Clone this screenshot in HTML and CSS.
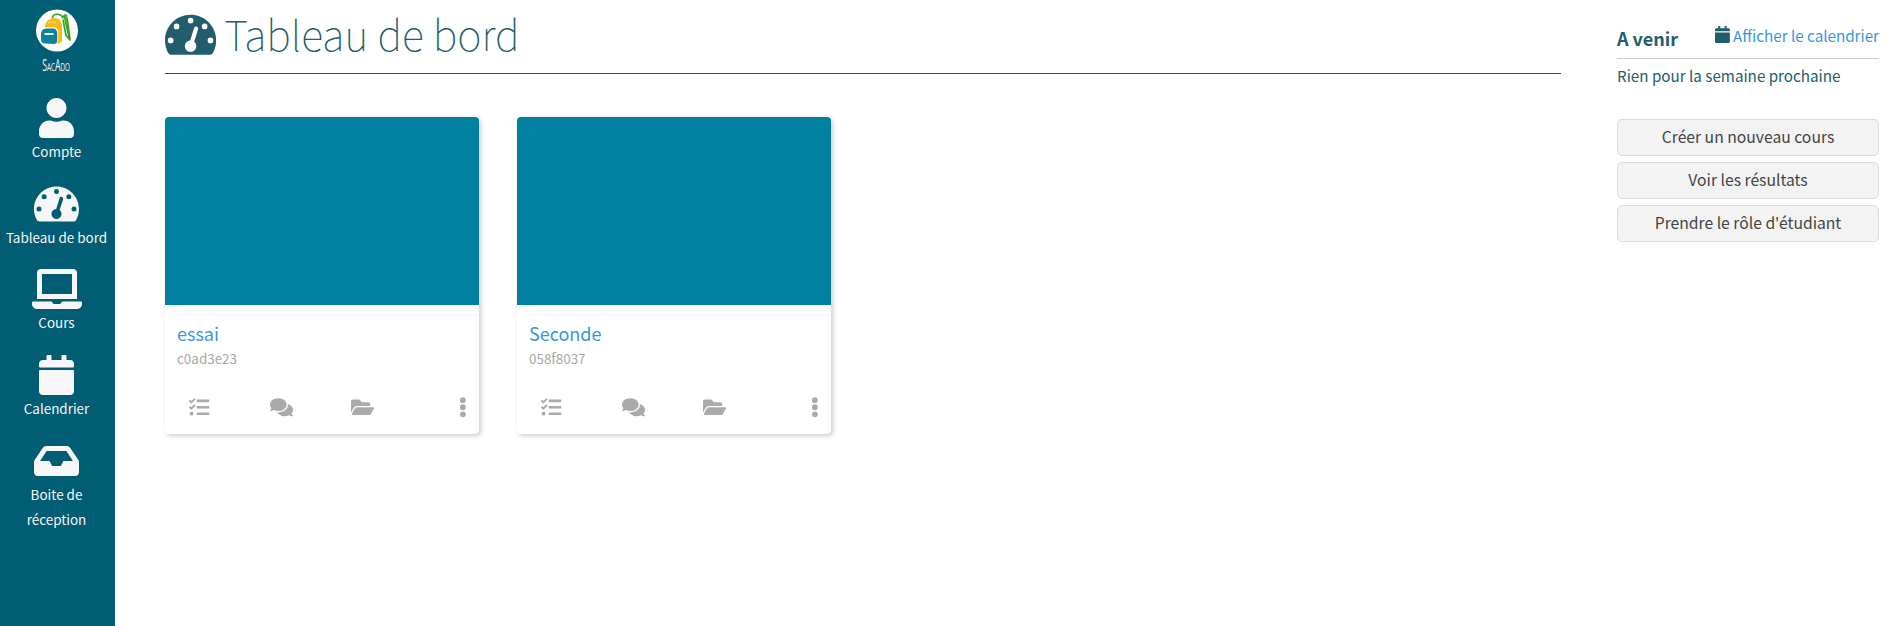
FILE: index.html
```html
<!DOCTYPE html>
<html lang="fr">
<head>
<meta charset="utf-8">
<title>Tableau de bord</title>
<link rel="stylesheet" href="styles.css">
</head>
<body>
<svg class="sprite" aria-hidden="true">
  <symbol id="user" viewBox="0 0 448 512"><path d="M224 256c70.7 0 128-57.3 128-128S294.7 0 224 0 96 57.3 96 128s57.3 128 128 128zm89.6 32h-16.7c-22.2 10.2-46.9 16-72.9 16s-50.6-5.8-72.9-16h-16.7C60.2 288 0 348.2 0 422.4V464c0 26.5 21.5 48 48 48h352c26.5 0 48-21.5 48-48v-41.6c0-74.2-60.2-134.4-134.4-134.4z"/></symbol>
  <symbol id="gauge" viewBox="0 0 576 512"><path fill-rule="evenodd" d="M288 32C128.94 32 0 160.94 0 320c0 52.8 14.25 102.26 39.06 144.8 5.61 9.62 16.3 15.2 27.44 15.2h443c11.14 0 21.83-5.58 27.44-15.2C561.75 422.26 576 372.8 576 320 576 160.94 447.06 32 288 32zM288 64a32 32 0 1 1 0 64 32 32 0 0 1 0-64zM130 130a32 32 0 1 1 0 64 32 32 0 0 1 0-64zM446 130a32 32 0 1 1 0 64 32 32 0 0 1 0-64zM64 288a32 32 0 1 1 0 64 32 32 0 0 1 0-64zM512 288a32 32 0 1 1 0 64 32 32 0 0 1 0-64zM327 181c4-12.600 17.500-19.700 30.100-15.900 12.600 4 19.700 17.500 15.800 30.100L327.700 333.800C343 345 352 363 352 384c0 35.300-28.700 64-64 64s-64-28.700-64-64c0-34 26.500-61.900 60-63.900z"/></symbol>
  <symbol id="laptop" viewBox="0 0 640 512"><path d="M624 416H381.54c-.74 19.81-14.71 32-32.74 32H288c-18.69 0-33.02-17.47-32.77-32H16c-8.8 0-16 7.2-16 16v16c0 35.2 28.8 64 64 64h512c35.2 0 64-28.8 64-64v-16c0-8.8-7.2-16-16-16zM576 48c0-26.400-21.600-48-48-48H112C85.600 0 64 21.600 64 48v336h512V48zm-64 272H128V64h384v256z"/></symbol>
  <symbol id="calendar" viewBox="0 0 448 512"><path d="M12 192h424c6.600 0 12 5.400 12 12v260c0 26.500-21.500 48-48 48H48c-26.500 0-48-21.500-48-48V204c0-6.600 5.400-12 12-12zm436-44v-36c0-26.500-21.500-48-48-48h-48V12c0-6.600-5.400-12-12-12h-40c-6.600 0-12 5.400-12 12v52H160V12c0-6.600-5.400-12-12-12h-40c-6.600 0-12 5.400-12 12v52H48C21.500 64 0 85.500 0 112v36c0 6.600 5.400 12 12 12h424c6.600 0 12-5.400 12-12z"/></symbol>
  <symbol id="inbox" viewBox="0 0 576 512"><path d="M567.938 243.908L462.25 85.374A48.003 48.003 0 0 0 422.311 64H153.689a48 48 0 0 0-39.938 21.374L8.062 243.908A47.994 47.994 0 0 0 0 270.533V400c0 26.510 21.490 48 48 48h480c26.510 0 48-21.490 48-48V270.533a47.994 47.994 0 0 0-8.062-26.625zM162.252 128h251.497l85.333 128H376l-32 64H232l-32-64H76.918l85.334-128z"/></symbol>
  <symbol id="tasks" viewBox="0 0 512 512"><path d="M139.610 35.500a12 12 0 0 0-17 0L58.930 98.810l-22.700-22.120a12 12 0 0 0-17 0L3.530 92.410a12 12 0 0 0 0 17l47.590 47.400a12.780 12.780 0 0 0 17.610 0l15.590-15.620L156.520 69a12.090 12.090 0 0 0 .09-17zm0 159.190a12 12 0 0 0-17 0l-63.680 63.720-22.700-22.100a12 12 0 0 0-17 0L3.530 252a12 12 0 0 0 0 17L51 316.500a12.770 12.770 0 0 0 17.600 0l15.700-15.690 72.200-72.220a12 12 0 0 0 .09-16.900zM64 368c-26.490 0-48.590 21.500-48.590 48S37.530 464 64 464a48 48 0 0 0 0-96zm432 16H208a16 16 0 0 0-16 16v32a16 16 0 0 0 16 16h288a16 16 0 0 0 16-16v-32a16 16 0 0 0-16-16zm0-320H208a16 16 0 0 0-16 16v32a16 16 0 0 0 16 16h288a16 16 0 0 0 16-16V80a16 16 0 0 0-16-16zm0 160H208a16 16 0 0 0-16 16v32a16 16 0 0 0 16 16h288a16 16 0 0 0 16-16v-32a16 16 0 0 0-16-16z"/></symbol>
  <symbol id="comments" viewBox="0 0 576 512"><path d="M416 192c0-88.400-93.100-160-208-160S0 103.600 0 192c0 34.300 14.100 65.900 38 92-13.400 30.200-35.500 54.200-35.800 54.500-2.200 2.300-2.800 5.700-1.500 8.700S4.800 352 8 352c36.600 0 66.900-12.300 88.700-25 32.200 15.700 70.300 25 111.300 25 114.900 0 208-71.600 208-160zm122 220c23.900-26 38-57.700 38-92 0-66.900-53.500-124.200-129.300-148.100.9 6.600 1.300 13.300 1.300 20.100 0 105.900-107.700 192-240 192-10.800 0-21.300-.8-31.700-1.900C207.800 439.600 281.800 480 368 480c41 0 79.100-9.200 111.300-25 21.800 12.700 52.100 25 88.700 25 3.200 0 6.100-1.900 7.300-4.800 1.300-2.900.7-6.300-1.500-8.700-.3-.3-22.400-24.200-35.800-54.500z"/></symbol>
  <symbol id="folder" viewBox="0 0 576 512"><path d="M572.694 292.093L500.270 416.248A63.997 63.997 0 0 1 444.989 448H45.025c-18.523 0-30.064-20.093-20.731-36.093l72.424-124.155A64 64 0 0 1 152 256h399.964c18.523 0 30.064 20.093 20.730 36.093zM152 224h328v-48c0-26.510-21.490-48-48-48H272l-64-64H48C21.490 64 0 85.490 0 112v278.046l69.077-118.418C86.214 242.250 117.989 224 152 224z"/></symbol>
  <symbol id="dots" viewBox="0 0 192 512"><circle cx="96" cy="80" r="72"/><circle cx="96" cy="256" r="72"/><circle cx="96" cy="432" r="72"/></symbol>
</svg>
<div class="app">
  <nav class="sidebar">
    <a class="brand">
      <svg class="brand-logo" viewBox="0 0 42 42">
        <circle cx="21" cy="21" r="21" fill="#fff"/>
        <path d="M16.500 8.500C17 3.500 24.500 3.500 27 8.500M26.500 9Q27 5.500 30 5.500L32 14L34 30.500L30 26L27 10M28.500 7L33.500 30" fill="none" stroke="#38a51f" stroke-width="1.700" stroke-linejoin="round"/>
        <path d="M9 20C8 12 13 9 18 8.500C24 9 26 12 26 18V30C26 33 24 34 20 34H12Z" fill="#fdb913"/>
        <path d="M12 13.500Q16 11.500 20 13.500" fill="none" stroke="#fff" stroke-width=".5"/>
        <rect x="4.300" y="17.800" width="17.900" height="17.400" rx="5" fill="#fff"/>
        <path d="M5 24Q5.500 19.500 10 19H17Q21 19 21.300 24V30Q21.500 34.500 17.500 34.500L9 34Q5 34 5 30Z" fill="#0e80a0"/>
        <path d="M8.500 24.500H17.500" stroke="#fff" stroke-width="1.900"/>
      </svg>
      <span class="brand-name">SacAdo</span>
    </a>
    <a class="nav-item"><svg class="icon i448"><use href="#user"/></svg><span>Compte</span></a>
    <a class="nav-item"><svg class="icon i576"><use href="#gauge"/></svg><span>Tableau de bord</span></a>
    <a class="nav-item"><svg class="icon i640"><use href="#laptop"/></svg><span>Cours</span></a>
    <a class="nav-item"><svg class="icon i448"><use href="#calendar"/></svg><span>Calendrier</span></a>
    <a class="nav-item"><svg class="icon i576"><use href="#inbox"/></svg><span>Boite de<br>réception</span></a>
  </nav>
  <main class="content">
    <h1 class="title"><svg class="icon i576"><use href="#gauge"/></svg><span>Tableau de bord</span></h1>
    <div class="cards">
      <article class="card">
        <div class="cover"></div>
        <div class="card-body">
          <a class="card-name">essai</a>
          <span class="card-code">c0ad3e23</span>
          <div class="actions">
            <svg class="icon i512"><use href="#tasks"/></svg>
            <svg class="icon i576"><use href="#comments"/></svg>
            <svg class="icon i576"><use href="#folder"/></svg>
            <svg class="icon i192"><use href="#dots"/></svg>
          </div>
        </div>
      </article>
      <article class="card">
        <div class="cover"></div>
        <div class="card-body">
          <a class="card-name">Seconde</a>
          <span class="card-code">058f8037</span>
          <div class="actions">
            <svg class="icon i512"><use href="#tasks"/></svg>
            <svg class="icon i576"><use href="#comments"/></svg>
            <svg class="icon i576"><use href="#folder"/></svg>
            <svg class="icon i192"><use href="#dots"/></svg>
          </div>
        </div>
      </article>
    </div>
  </main>
  <aside class="aside">
    <div class="aside-head">
      <h2 class="aside-title">A venir</h2>
      <a class="calendar-link"><svg class="icon i448"><use href="#calendar"/></svg><span>Afficher le calendrier</span></a>
    </div>
    <p class="empty">Rien pour la semaine prochaine</p>
    <div class="buttons">
      <button class="btn">Créer un nouveau cours</button>
      <button class="btn">Voir les résultats</button>
      <button class="btn">Prendre le rôle d'étudiant</button>
    </div>
  </aside>
</div>
</body>
</html>
```
FILE: styles.css
```css
* { box-sizing: border-box; }
body {
  margin: 0;
  background: #fff;
  color: #225d6b;
  font-family: "Source Sans Pro", "Noto Sans CJK SC", "Noto Sans", sans-serif;
  font-size: 15.200px;
}
.sprite { position: absolute; width: 0; height: 0; }
.icon { display: block; flex: none; height: 1em; fill: currentColor; }
.i192 { width: .375em; }
.i448 { width: .875em; }
.i512 { width: 1em; }
.i576 { width: 1.125em; }
.i640 { width: 1.25em; }

.app { display: flex; min-height: 626px; }

.sidebar {
  width: 115px;
  flex: none;
  padding: 9px 2px 0 0;
  background: #005d73;
  color: #f7f7f7;
}
.brand { display: flex; flex-direction: column; align-items: center; height: 89px; }
.brand-logo { width: 42px; height: 43px; }
.brand-name {
  font-family: "Open Sans", sans-serif;
  font-size: 14px;
  font-variant-caps: small-caps;
  line-height: 26px;
  transform: scale(.63, 1.15);
}
.nav-item {
  display: flex;
  flex-direction: column;
  align-items: center;
  min-height: 85.700px;
  text-align: center;
  font-size: 13.450px;
  line-height: 25px;
}
.nav-item .icon { font-size: 40px; }
.nav-item span { margin-top: 1px; }

.content { width: 1396px; margin-left: 50px; flex: none; }
.title {
  display: flex;
  align-items: center;
  gap: 8px;
  height: 74px;
  margin: 0;
  padding-bottom: 4px;
  border-bottom: 1px solid #005b79;
  font-size: 41.300px;
  font-weight: 100;
}
.title .icon { font-size: 45.500px; }
.title span { padding-bottom: 4px; }
.cards { display: flex; gap: 38px; margin-top: 43px; }
.card {
  width: 314px;
  height: 317px;
  overflow: hidden;
  border-radius: 4px;
  background: #fff;
  box-shadow: 2px 2px 5px rgba(0, 0, 0, .2);
}
.cover { height: 188px; background: #0081a1; }
.card-body { display: flex; flex-direction: column; padding: 16px 12px 0; }
.card-name { color: #3597e4; font-size: 18px; line-height: 25px; }
.card-code { color: #a8a8a8; font-size: 13.450px; line-height: 24px; }
.actions {
  display: grid;
  grid-template-columns: 81px 81px 108px auto;
  margin-top: 27px;
  padding-left: 12px;
  color: #aaa;
  font-size: 20.500px;
}

.aside { width: 262px; margin-left: 56px; }
.aside-head {
  display: flex;
  justify-content: space-between;
  height: 59px;
  padding-top: 22px;
  border-bottom: 1px solid #c9c9c9;
}
.aside-title { margin: 0; padding-top: 3px; font-size: 18px; font-weight: 700; line-height: 26px; }
.calendar-link { display: flex; gap: 3px; line-height: 26px; color: #3597e4; }
.calendar-link .icon { margin-top: 4px; font-size: 17px; color: #225d6b; }
.empty { margin: 3px 0 0; line-height: 26px; }
.buttons { display: flex; flex-direction: column; gap: 6px; margin-top: 31px; }
.btn {
  height: 37px;
  padding: 0 0 2px;
  border: 1px solid #dcdcdc;
  border-radius: 5px;
  background: #f3f3f3;
  color: #444;
  font-family: inherit;
  font-size: 15.700px;
}
```
